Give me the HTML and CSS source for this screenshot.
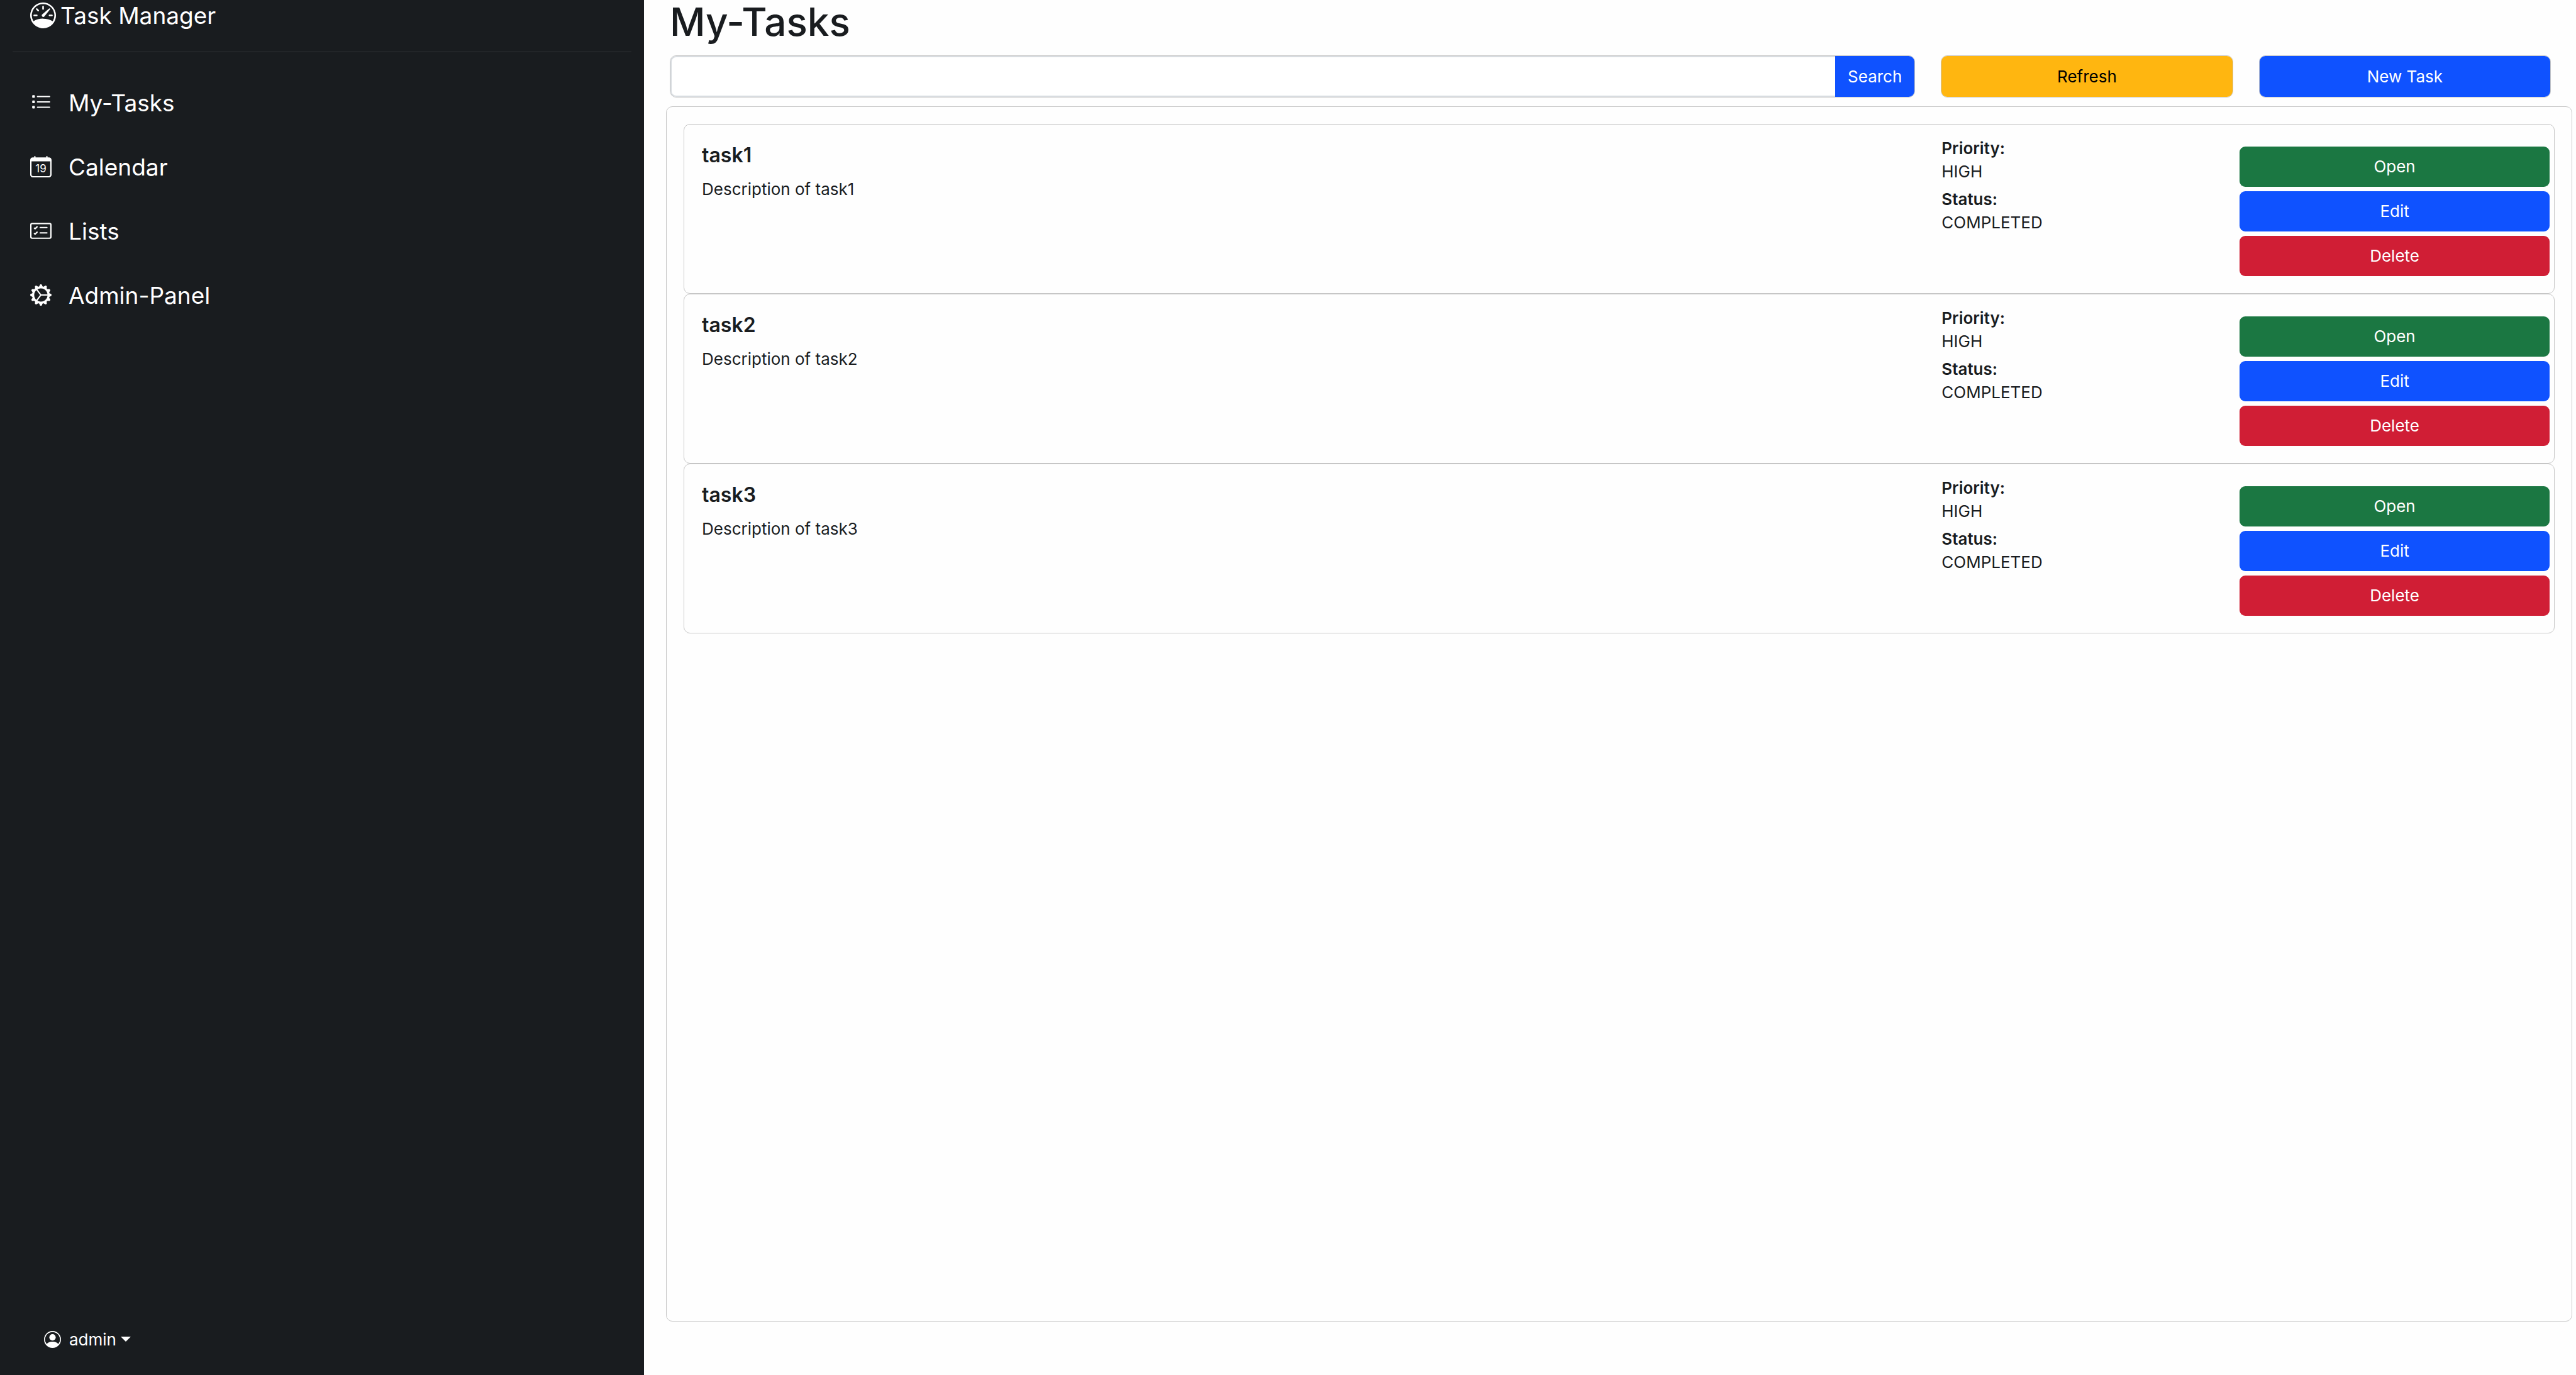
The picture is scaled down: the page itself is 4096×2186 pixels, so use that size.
FILE: index.html
```html
<!DOCTYPE html>
<html lang="en">
<head>
<meta charset="utf-8">
<meta name="viewport" content="width=device-width, initial-scale=1">
<title>Task Manager</title>
<link rel="stylesheet" href="styles.css">
</head>
<body>
<div class="app">
  <aside class="sidebar">
    <a class="brand" href="#">
      <svg class="icon icon-brand" viewBox="0 0 16 16" aria-hidden="true"><path d="M8 2a.5.5 0 0 1 .5.5V4a.5.5 0 0 1-1 0V2.5A.5.5 0 0 1 8 2zM3.732 3.732a.5.5 0 0 1 .707 0l.915.914a.5.5 0 1 1-.708.708l-.914-.915a.5.5 0 0 1 0-.707zM2 8a.5.5 0 0 1 .5-.5h1.586a.5.5 0 0 1 0 1H2.5A.5.5 0 0 1 2 8zm9.5 0a.5.5 0 0 1 .5-.5h1.5a.5.5 0 0 1 0 1H12a.5.5 0 0 1-.5-.5zm.754-4.246a.389.389 0 0 0-.527-.02L7.547 7.31A.91.91 0 1 0 8.85 8.569l3.434-4.297a.389.389 0 0 0-.029-.518z"/><path fill-rule="evenodd" d="M6.664 15.889A8 8 0 1 1 9.336.11a8 8 0 0 1-2.672 15.78zm-4.665-4.283A11.945 11.945 0 0 1 8 10c2.186 0 4.236.585 6.001 1.606a7 7 0 1 0-12.002 0z"/></svg>
      <span>Task Manager</span>
    </a>
    <hr class="divider">
    <nav class="nav">
      <a class="nav-link" href="#tasks">
        <svg class="icon icon-nav" viewBox="0 0 16 16" aria-hidden="true"><path d="M5 11.5a.5.5 0 0 1 .5-.5h9a.5.5 0 0 1 0 1h-9a.5.5 0 0 1-.5-.5m0-4a.5.5 0 0 1 .5-.5h9a.5.5 0 0 1 0 1h-9a.5.5 0 0 1-.5-.5m0-4a.5.5 0 0 1 .5-.5h9a.5.5 0 0 1 0 1h-9a.5.5 0 0 1-.5-.5"/><rect x="1.5" y="2.5" width="2" height="2" rx=".6"/><rect x="1.5" y="6.5" width="2" height="2" rx=".6"/><rect x="1.5" y="10.5" width="2" height="2" rx=".6"/></svg>
        <span>My-Tasks</span>
      </a>
      <a class="nav-link" href="#calendar">
        <svg class="icon icon-nav" viewBox="0 0 16 16" aria-hidden="true"><path d="M3.5 0a.5.5 0 0 1 .5.5V1h8V.5a.5.5 0 0 1 1 0V1h1a2 2 0 0 1 2 2v11a2 2 0 0 1-2 2H2a2 2 0 0 1-2-2V3a2 2 0 0 1 2-2h1V.5a.5.5 0 0 1 .5-.5M1 4v10a1 1 0 0 0 1 1h12a1 1 0 0 0 1-1V4z"/><text class="icon-day" x="8" y="12" text-anchor="middle">19</text></svg>
        <span>Calendar</span>
      </a>
      <a class="nav-link" href="#lists">
        <svg class="icon icon-nav" viewBox="0 0 16 16" aria-hidden="true"><path d="M14.5 3a.5.5 0 0 1 .5.5v9a.5.5 0 0 1-.5.5h-13a.5.5 0 0 1-.5-.5v-9a.5.5 0 0 1 .5-.5zm-13-1A1.5 1.5 0 0 0 0 3.5v9A1.5 1.5 0 0 0 1.5 14h13a1.5 1.5 0 0 0 1.5-1.5v-9A1.5 1.5 0 0 0 14.5 2z"/><path d="M7 5.5a.5.5 0 0 1 .5-.5h5a.5.5 0 0 1 0 1h-5a.5.5 0 0 1-.5-.5m-1.496-.854a.5.5 0 0 1 0 .708l-1.5 1.5a.5.5 0 0 1-.708 0l-.5-.5a.5.5 0 1 1 .708-.708l.146.147 1.146-1.147a.5.5 0 0 1 .708 0M7 9.5a.5.5 0 0 1 .5-.5h5a.5.5 0 0 1 0 1h-5a.5.5 0 0 1-.5-.5m-1.496-.854a.5.5 0 0 1 0 .708l-1.5 1.5a.5.5 0 0 1-.708 0l-.5-.5a.5.5 0 0 1 .708-.708l.146.147 1.146-1.147a.5.5 0 0 1 .708 0"/></svg>
        <span>Lists</span>
      </a>
      <a class="nav-link" href="#admin">
        <svg class="icon icon-nav" viewBox="0 0 16 16" aria-hidden="true"><path d="M7.068.727c.243-.97 1.62-.97 1.864 0l.071.286a.96.96 0 0 0 1.622.434l.205-.211c.695-.719 1.888-.03 1.613.931l-.08.284a.96.96 0 0 0 1.187 1.187l.283-.081c.96-.275 1.65.918.931 1.613l-.211.205a.96.96 0 0 0 .434 1.622l.286.071c.97.243.97 1.62 0 1.864l-.286.071a.96.96 0 0 0-.434 1.622l.211.205c.719.695.03 1.888-.931 1.613l-.284-.08a.96.96 0 0 0-1.187 1.187l.081.283c.275.96-.918 1.65-1.613.931l-.205-.211a.96.96 0 0 0-1.622.434l-.071.286c-.243.97-1.62.97-1.864 0l-.071-.286a.96.96 0 0 0-1.622-.434l-.205.211c-.695.719-1.888.03-1.613-.931l.08-.284a.96.96 0 0 0-1.186-1.187l-.284.081c-.96.275-1.65-.918-.931-1.613l.211-.205a.96.96 0 0 0-.434-1.622l-.286-.071c-.97-.243-.97-1.62 0-1.864l.286-.071a.96.96 0 0 0 .434-1.622l-.211-.205c-.719-.695-.03-1.888.931-1.613l.284.08a.96.96 0 0 0 1.187-1.186l-.081-.284c-.275-.96.918-1.65 1.613-.931l.205.211a.96.96 0 0 0 1.622-.434zM12.973 8.5H8.25l-2.834 3.779A4.998 4.998 0 0 0 12.973 8.5m0-1a4.998 4.998 0 0 0-7.557-3.779l2.834 3.78zM5.048 3.967l-.087.065zm-.431.355A4.98 4.98 0 0 0 3.002 8c0 1.455.622 2.765 1.615 3.678L7.375 8zm.344 7.646.087.065z"/></svg>
        <span>Admin-Panel</span>
      </a>
    </nav>
    <button class="user" type="button" aria-haspopup="true">
      <svg class="icon icon-user" viewBox="0 0 16 16" aria-hidden="true"><path d="M11 6a3 3 0 1 1-6 0 3 3 0 0 1 6 0"/><path fill-rule="evenodd" d="M0 8a8 8 0 1 1 16 0A8 8 0 0 1 0 8m8-7a7 7 0 0 0-5.468 11.37C3.242 11.226 4.805 10 8 10s4.757 1.225 5.468 2.37A7 7 0 0 0 8 1"/></svg>
      <span>admin</span>
      <span class="caret"></span>
    </button>
  </aside>

  <main class="main">
    <h1 class="page-title">My-Tasks</h1>
    <div class="toolbar">
      <form class="search frame">
        <input class="search-input" type="text" aria-label="Search tasks">
        <button class="btn btn-primary search-btn" type="button">Search</button>
      </form>
      <div class="frame"><button class="btn btn-warning" type="button">Refresh</button></div>
      <div class="frame"><button class="btn btn-primary" type="button">New Task</button></div>
    </div>

    <section class="panel">
      <article class="card">
        <div class="summary">
          <h2 class="task-title">task1</h2>
          <p class="text">Description of task1</p>
        </div>
        <dl class="details">
          <dt>Priority:</dt><dd>HIGH</dd>
          <dt>Status:</dt><dd>COMPLETED</dd>
        </dl>
        <div class="actions">
          <button class="btn btn-success" type="button">Open</button>
          <button class="btn btn-primary" type="button">Edit</button>
          <button class="btn btn-danger" type="button">Delete</button>
        </div>
      </article>
      <article class="card">
        <div class="summary">
          <h2 class="task-title">task2</h2>
          <p class="text">Description of task2</p>
        </div>
        <dl class="details">
          <dt>Priority:</dt><dd>HIGH</dd>
          <dt>Status:</dt><dd>COMPLETED</dd>
        </dl>
        <div class="actions">
          <button class="btn btn-success" type="button">Open</button>
          <button class="btn btn-primary" type="button">Edit</button>
          <button class="btn btn-danger" type="button">Delete</button>
        </div>
      </article>
      <article class="card">
        <div class="summary">
          <h2 class="task-title">task3</h2>
          <p class="text">Description of task3</p>
        </div>
        <dl class="details">
          <dt>Priority:</dt><dd>HIGH</dd>
          <dt>Status:</dt><dd>COMPLETED</dd>
        </dl>
        <div class="actions">
          <button class="btn btn-success" type="button">Open</button>
          <button class="btn btn-primary" type="button">Edit</button>
          <button class="btn btn-danger" type="button">Delete</button>
        </div>
      </article>
    </section>
  </main>
</div>
</body>
</html>
```

FILE: styles.css
```css
*,
*::before,
*::after {
  box-sizing: border-box;
}

body {
  margin: 0;
  background: #fefefe;
  color: #191c1f;
  font-family: Inter, "Liberation Sans", sans-serif;
  font-size: 26px;
  line-height: 37px;
}

h1, h2, p, dl, dd {
  margin: 0;
}

button,
input {
  font: inherit;
}

.app {
  display: grid;
  grid-template-columns: 1fr 3fr;
  min-height: 100vh;
}

/* Sidebar */
.sidebar {
  display: flex;
  flex-direction: column;
  padding: 0 20px 37px;
  background: #191c1f;
  color: #fff;
}

.icon {
  flex: none;
  fill: currentColor;
}

.icon-brand {
  width: 41px;
  height: 41px;
}

.icon-nav {
  width: 34px;
  height: 34px;
}

.icon-user {
  width: 27px;
  height: 27px;
}

.icon-day {
  font-size: 8px;
}

.brand {
  display: flex;
  align-items: center;
  gap: 7px;
  height: 49px;
  padding-left: 28px;
  color: inherit;
  font-size: 37px;
  text-decoration: none;
}

.divider {
  width: 100%;
  margin: 33px 0 29px;
  border: 0;
  border-top: 1px solid #303336;
}

.nav {
  display: flex;
  flex-direction: column;
}

.nav-link {
  display: flex;
  align-items: center;
  gap: 27px;
  height: 102px;
  padding-left: 28px;
  color: inherit;
  font-size: 37px;
  text-decoration: none;
}

.user {
  display: flex;
  align-items: center;
  align-self: flex-start;
  gap: 13px;
  height: 40px;
  margin-top: auto;
  padding: 0 0 0 50px;
  border: 0;
  background: none;
  color: inherit;
}

.caret {
  border: 8px solid transparent;
  border-top-color: currentColor;
  border-bottom: 0;
  margin-left: -6px;
}

/* Main column */
.main {
  display: flex;
  flex-direction: column;
  padding: 0 6px 85px 35px;
}

.page-title {
  padding-left: 6px;
  font-size: 62px;
  font-weight: 500;
  line-height: 69px;
}

.toolbar {
  display: grid;
  grid-template-columns: repeat(12, 1fr);
  gap: 41px;
  margin: 19px 34px 14px 6px;
}

.frame {
  display: flex;
  grid-column: span 2;
  border: 1px solid #c6c6c6;
  border-radius: 10px;
}

.search {
  grid-column: span 8;
}

.search-input {
  flex: 1;
  min-width: 0;
  padding: 0 20px;
  border: 2px solid #d8dce0;
  border-right: 0;
  border-radius: 9px 0 0 9px;
  background: #fff;
  color: inherit;
}

.btn {
  flex: 1;
  padding: 14px 20px;
  border: 0;
  border-radius: 9px;
  color: #fff;
  line-height: 37px;
}

.search-btn {
  flex: none;
  border-radius: 0 9px 9px 0;
}

.btn-primary {
  background: #0f52ff;
}

.btn-warning {
  background: #ffb610;
  color: #000;
}

.btn-success {
  background: #1b7742;
}

.btn-danger {
  background: #d01e35;
}

.panel {
  flex: 1;
  padding: 27px;
  border: 1px solid #c6c6c6;
  border-radius: 10px;
}

/* Task cards */
.card {
  display: grid;
  grid-template-columns: 104fr 25fr 26fr;
  padding: 0 7px 27px 28px;
  border: 1px solid #c6c6c6;
  border-radius: 10px;
}

.summary {
  padding-top: 28px;
}

.task-title {
  margin-bottom: 15px;
  font-size: 32px;
  font-weight: 600;
  line-height: 41px;
}

.details {
  padding-top: 19px;
}

.details dt {
  font-weight: 600;
}

.details dd {
  margin-bottom: 7px;
}

.actions {
  display: grid;
  gap: 7px;
  padding-top: 35px;
}

.actions .btn {
  padding: 13px 20px 14px;
}
```
